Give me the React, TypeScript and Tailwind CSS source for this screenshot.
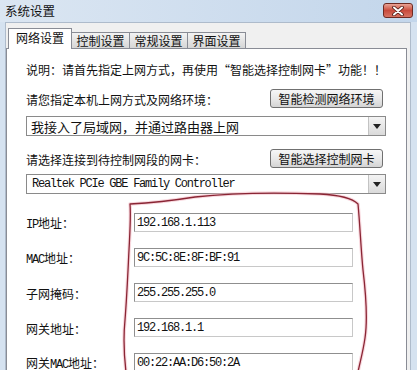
import React from "react";

const cjk = { fontFamily: '"Noto Sans CJK SC", "Noto Sans", sans-serif' };
const mono = { fontFamily: '"Liberation Mono", "Noto Sans CJK SC", monospace' };

const fields = [
  { label: ["IP", "地址："], value: "192.168.1.113" },
  { label: ["MAC", "地址："], value: "9C:5C:8E:8F:BF:91" },
  { label: ["", "子网掩码："], value: "255.255.255.0" },
  { label: ["", "网关地址："], value: "192.168.1.1" },
  { label: ["网关", "MAC", "地址："], value: "00:22:AA:D6:50:2A" },
];

function DropArrow() {
  return (
    <div className="flex h-full w-[17px] items-center justify-center border-l border-[#c3c3c3] bg-gradient-to-b from-[#f4f4f4] to-[#dadada]">
      <svg width="8" height="5" viewBox="0 0 8 5">
        <path d="M0 0 H8 L4 5 Z" fill="#222" />
      </svg>
    </div>
  );
}

function Select({ children, latin }: { children: React.ReactNode; latin?: boolean }) {
  return (
    <div className="flex h-[20px] w-full items-center border border-[#8a8a8a] bg-white">
      <div
        className={latin ? "flex-1 pl-[5px] text-[12px] tracking-[-1.25px] text-[#111]" : "flex-1 pl-[4px] text-[13px] leading-none text-[#111]"}
        style={latin ? mono : cjk}
      >
        {children}
      </div>
      <DropArrow />
    </div>
  );
}

function Button({ children }: { children: React.ReactNode }) {
  return (
    <button
      className="mr-[3px] flex h-[19px] w-[113px] items-center justify-center rounded-[3px] border border-[#707070] bg-gradient-to-b from-[#f6f6f6] via-[#e9e9e9] to-[#d4d4d4] text-[12px] leading-none text-[#111]"
      style={cjk}
    >
      {children}
    </button>
  );
}

export default function App() {
  return (
    <div className="relative flex h-[370px] w-[417px] flex-col overflow-hidden bg-[#d5e2f0]" style={cjk}>
      {/* title bar */}
      <div className="flex h-[22px] shrink-0 items-center justify-between bg-gradient-to-r from-[#dbe6f2] to-[#c3d6eb] pl-[5px] pr-[4px]">
        <span className="text-[12.5px] leading-none text-[#111]">系统设置</span>
        <div className="flex h-[15px] w-[30px] items-center justify-center self-start mt-[3px] rounded-[3px] border border-[#6e2a22] bg-gradient-to-b from-[#e9a396] via-[#c84a3c] to-[#d77262]">
          <svg width="12" height="10" viewBox="0 0 12 10">
            <path d="M2 1.5 L10 8.5 M10 1.5 L2 8.5" stroke="#4a1712" strokeWidth="3.6" strokeLinecap="round" />
            <path d="M2 1.5 L10 8.5 M10 1.5 L2 8.5" stroke="#fff" strokeWidth="2" strokeLinecap="round" />
          </svg>
        </div>
      </div>

      {/* client area */}
      <div className="ml-[5px] mr-[6px] flex flex-1 flex-col border-l border-r border-t border-[#aebbcb] bg-[#f0f0f0]">
        {/* tabs */}
        <div className="flex h-[25px] shrink-0 items-end pl-[2px]">
          <div className="relative z-10 -mb-px flex h-[21px] w-[64px] items-start justify-center border border-b-0 border-[#898c95] bg-white pt-[3px] text-[12px] leading-none text-[#111]">
            网络设置
          </div>
          {["控制设置", "常规设置", "界面设置"].map((t) => (
            <div
              key={t}
              className="-ml-px flex h-[16px] w-[59px] items-center justify-center border border-b-0 border-[#898c95] bg-gradient-to-b from-[#f3f3f3] to-[#d6d6d6] text-[12px] leading-none text-[#111] first:ml-0"
            >
              {t}
            </div>
          ))}
        </div>

        {/* panel */}
        <div className="w-[401px] flex-1 border border-[#898c95] bg-white pl-[19px]">
          <div className="w-[360px] pt-[13px] text-[12px] text-[#111]">
            <div className="flex h-[16px] items-center leading-none">说明：请首先指定上网方式，再使用“智能选择控制网卡”功能！！</div>

            <div className="mt-[11px] flex items-center justify-between">
              <span className="mt-[2px] leading-none">请您指定本机上网方式及网络环境：</span>
              <Button>智能检测网络环境</Button>
            </div>
            <div className="mt-[8px]">
              <Select>我接入了局域网，并通过路由器上网</Select>
            </div>

            <div className="mt-[13px] flex items-center justify-between">
              <span className="mt-[2px] leading-none">请选择连接到待控制网段的网卡：</span>
              <Button>智能选择控制网卡</Button>
            </div>
            <div className="mt-[6px]">
              <Select latin>Realtek PCIe GBE Family Controller</Select>
            </div>

            <div className="mt-[19px] flex flex-col gap-[16px]">
              {fields.map((f) => (
                <div key={f.value} className="flex h-[19px] items-center">
                  <div className="mt-[2px] w-[108px] leading-none">
                    {f.label.map((part, i) =>
                      /^[A-Z]+$/.test(part) ? (
                        <span key={i} className="tracking-[-1.2px]" style={mono}>
                          {part}
                        </span>
                      ) : (
                        <span key={i}>{part}</span>
                      )
                    )}
                  </div>
                  <div className="flex h-[19px] w-[219px] items-center border border-[#8f8f8f] border-b-[#c8c8c8] border-r-[#c8c8c8] bg-white pl-[2px]">
                    <span className="text-[12px] leading-none tracking-[-1.2px] text-[#111]" style={mono}>
                      {f.value}
                    </span>
                  </div>
                </div>
              ))}
            </div>
          </div>
        </div>
      </div>

      {/* hand-drawn annotation */}
      <svg className="pointer-events-none absolute left-0 top-0" width="417" height="370" viewBox="0 0 417 370">
        <g fill="none" strokeLinecap="round" strokeLinejoin="round">
          <path
            d="M126 372 C124 355 123 340 125 320 C127 295 128 270 129 250 C130 230 131 215 130 204 C150 203 170 201 195 197 C230 193 270 192 320 194 C340 195 352 198 358 204 C360 225 361 250 363 270 C366 295 368 318 365 338 C363 352 360 362 358 372"
            stroke="#f2b8c2"
            strokeWidth="3.5"
            opacity="0.55"
          />
          <path
            d="M126 372 C124 355 123 340 125 320 C127 295 128 270 129 250 C130 230 131 215 130 204 C150 203 170 201 195 197 C230 193 270 192 320 194 C340 195 352 198 358 204 C360 225 361 250 363 270 C366 295 368 318 365 338 C363 352 360 362 358 372"
            stroke="#8a2534"
            strokeWidth="1.3"
          />
        </g>
      </svg>
    </div>
  );
}
